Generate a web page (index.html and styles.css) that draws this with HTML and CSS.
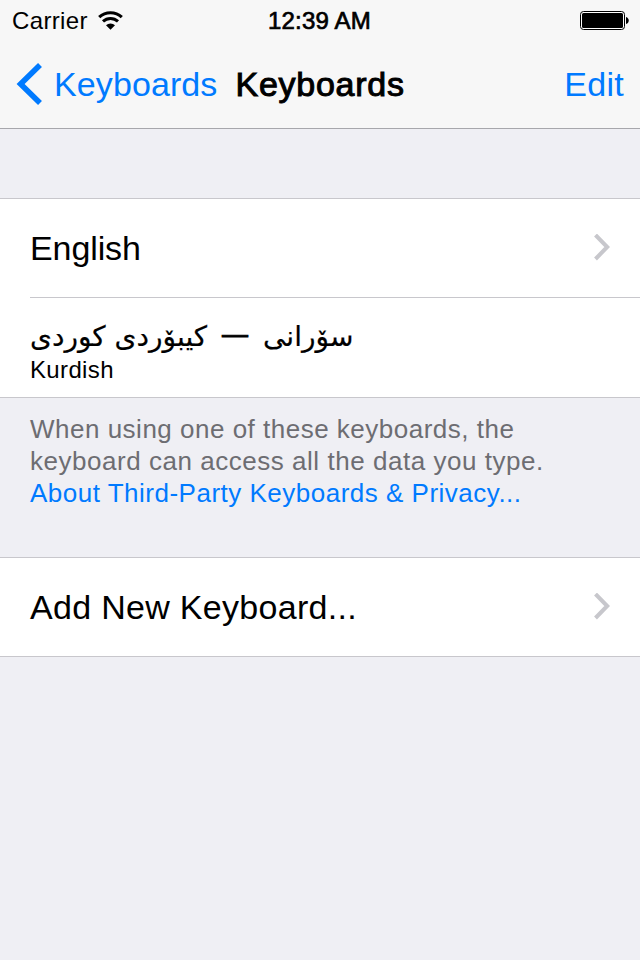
FILE: index.html
```
<!DOCTYPE html>
<html lang="en">
<head>
    <meta charset="UTF-8">
    <meta name="viewport" content="width=device-width, initial-scale=1.0">
    <title>Keyboards</title>
    <link rel="stylesheet" href="styles.css">
</head>
<body>
    <header class="header">
        <div class="status-bar">
            <div class="status-left">
                <span class="carrier">Carrier</span>
                <svg class="wifi" width="26" height="20" viewBox="0 0 26 20">
                    <path d="M1.2 6.2 A16.5 16.5 0 0 1 23.8 6.2" fill="none" stroke="#000" stroke-width="3.1"/>
                    <path d="M5 10.4 A11 11 0 0 1 20 10.4" fill="none" stroke="#000" stroke-width="3"/>
                    <path d="M8 14.2 A6.5 6.5 0 0 1 17 14.2 L12.5 18.8 Z" fill="#000"/>
                </svg>
            </div>
            <span class="time">12:39 AM</span>
            <div class="status-right">
                <svg width="50" height="20" viewBox="0 0 50 20">
                    <rect x=".5" y=".5" width="44" height="18" rx="3" fill="#fff" stroke="#000"/>
                    <rect x="2" y="2" width="41" height="15" rx="1.5" fill="#000"/>
                    <path d="M46 6 C49.7 7 49.7 12 46 13 Z" fill="#000"/>
                </svg>
            </div>
        </div>
        <nav class="nav-bar">
            <a href="#" class="back">
                <svg width="26" height="42" viewBox="0 0 26 42">
                    <path d="M24 2 L4.6 21 L24 40" fill="none" stroke="#007aff" stroke-width="5.6"/>
                </svg>
                <span class="back-label">Keyboards</span>
            </a>
            <h1 class="title">Keyboards</h1>
            <a href="#" class="edit">Edit</a>
        </nav>
    </header>

    <main>
        <ul class="group">
            <li class="row">
                <span class="label english">English</span>
                <svg class="chevron" width="18" height="28" viewBox="0 0 18 28">
                    <path d="M1.5 1 L13.2 13 L1.5 25" fill="none" stroke="#c7c7cc" stroke-width="4"/>
                </svg>
            </li>
            <li class="row stacked">
                <span class="label kurdish" lang="ckb">سۆرانی <span class="dash">—</span> کیبۆردی کوردی</span>
                <span class="detail">Kurdish</span>
            </li>
        </ul>
        <p class="note">
            <span class="line-one">When using one of these keyboards, the</span><br>
            <span class="line-two">keyboard can access all the data you type.</span><br>
            <a href="#">About Third-Party Keyboards &amp; Privacy...</a>
        </p>

        <ul class="group">
            <li class="row">
                <span class="label add">Add New Keyboard...</span>
                <svg class="chevron" width="18" height="28" viewBox="0 0 18 28">
                    <path d="M1.5 1 L13.2 13 L1.5 25" fill="none" stroke="#c7c7cc" stroke-width="4"/>
                </svg>
            </li>
        </ul>
    </main>
</body>
</html>
```
FILE: styles.css
```
* {
    margin: 0;
    padding: 0;
    box-sizing: border-box;
}

body {
    font-family: 'Liberation Sans', Arial, sans-serif;
    background: #efeff4;
    color: #000;
    min-height: 960px;
}

a {
    color: #007aff;
    text-decoration: none;
}

/* Header */
.header {
    height: 129px;
    background: #f7f7f7;
    border-bottom: 1px solid #a7a7ac;
}

.status-bar {
    display: grid;
    grid-template-columns: 1fr auto 1fr;
    align-items: center;
    height: 40px;
    padding: 2px 10px 0 12px;
    font-size: 24px;
    line-height: 38px;
}

.status-left {
    display: flex;
    align-items: center;
    gap: 10px;
}

.carrier {
    letter-spacing: 0.35px;
}

.time {
    margin-right: 3px;
    letter-spacing: 0.2px;
    -webkit-text-stroke: 0.7px #000;
}

.status-right {
    display: flex;
    justify-content: flex-end;
}

.nav-bar {
    display: flex;
    align-items: center;
    height: 88px;
    padding: 0 16px;
    font-size: 34px;
}

.back {
    display: flex;
    align-items: center;
    gap: 12px;
}

.back-label {
    letter-spacing: 0.1px;
}

.title {
    margin-left: 18px;
    font-size: 34px;
    font-weight: normal;
    letter-spacing: 0.75px;
    -webkit-text-stroke: 1px #000;
}

.edit {
    margin-left: auto;
    letter-spacing: 0.3px;
}

/* Table groups */
.group {
    list-style: none;
    background: #fff;
    border-top: 1px solid #c8c7cc;
    border-bottom: 1px solid #c8c7cc;
}

main {
    padding-top: 69px;
}

.row {
    display: flex;
    align-items: center;
    justify-content: space-between;
    height: 98px;
    margin-left: 30px;
    padding-right: 28px;
    font-size: 34px;
}

.row + .row {
    height: 100px;
    border-top: 1px solid #c8c7cc;
}

.english {
    letter-spacing: -0.1px;
}

.add {
    letter-spacing: 0.3px;
}

.stacked {
    flex-direction: column;
    align-items: flex-start;
    justify-content: flex-start;
    padding-top: 18px;
}

.kurdish {
    height: 40px;
    font-family: 'DejaVu Sans', sans-serif;
    font-size: 28px;
    line-height: 42px;
    -webkit-text-stroke: 0.2px #000;
}

.dash {
    margin: 0 6px;
    font-family: 'Liberation Sans', Arial, sans-serif;
    font-size: 26px;
    line-height: 1;
    vertical-align: 3px;
    -webkit-text-stroke: 0.8px #000;
}

.detail {
    font-size: 24px;
    line-height: 28px;
    letter-spacing: 0.35px;
}

.note {
    height: 159px;
    padding: 15px 30px 0;
    color: #6d6d72;
    font-size: 26px;
    line-height: 32px;
    letter-spacing: 0.5px;
    white-space: nowrap;
}

.line-two {
    letter-spacing: 0.53px;
}
```
